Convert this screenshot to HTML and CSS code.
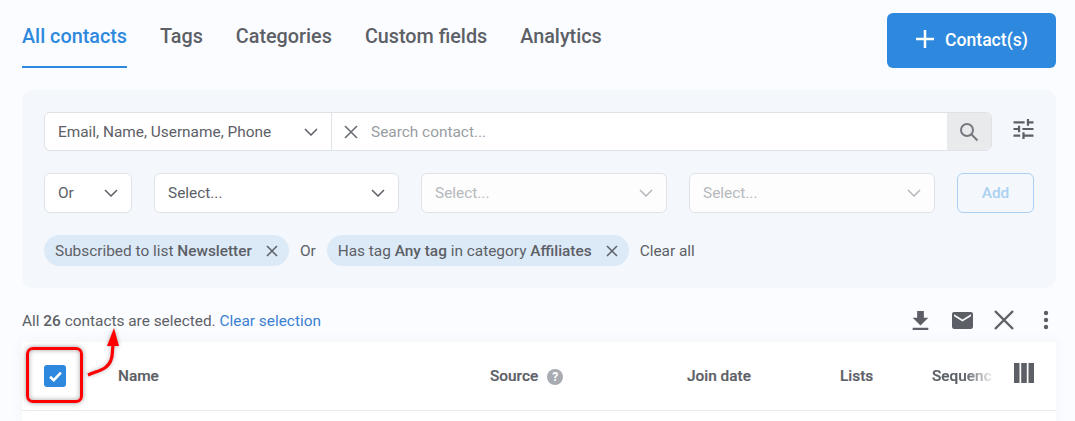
FILE: index.html
```html
<!DOCTYPE html>
<html lang="en">
<head>
<meta charset="utf-8">
<title>Contacts</title>
<link rel="stylesheet" href="styles.css">
</head>
<body>
<div class="page">
  <header class="top">
    <nav class="tabs">
      <a class="tab active">All contacts</a>
      <a class="tab">Tags</a>
      <a class="tab">Categories</a>
      <a class="tab">Custom fields</a>
      <a class="tab">Analytics</a>
    </nav>
    <button class="add-contact">
      <svg class="plus" viewBox="0 0 20 20"><path d="M10 1v18M1 10h18"/></svg>
      <span>Contact(s)</span>
    </button>
  </header>

  <section class="panel">
    <div class="search-row">
      <div class="search">
        <div class="search-type">
          <span>Email, Name, Username, Phone</span>
          <svg class="chev" viewBox="0 0 14 8"><path d="M1 1l6 6 6-6"/></svg>
        </div>
        <svg class="x-icon" viewBox="0 0 14 14"><path d="M1 1l12 12M13 1L1 13"/></svg>
        <span class="search-input">Search contact...</span>
        <div class="search-btn">
          <svg viewBox="0 0 20 20"><circle cx="8" cy="8" r="6"/><path d="M12.500 12.500L18.500 18.500"/></svg>
        </div>
      </div>
      <svg class="tune" viewBox="3 3 18 18"><path d="M3 17v2h6v-2H3zM3 5v2h10V5H3zm10 16v-2h8v-2h-8v-2h-2v6h2zM7 9v2H3v2h4v2h2V9H7zm14 4v-2H11v2h10zm-6-4h2V7h4V5h-4V3h-2v6z"/></svg>
    </div>

    <div class="filter-row">
      <div class="select op"><span>Or</span><svg class="chev" viewBox="0 0 14 8"><path d="M1 1l6 6 6-6"/></svg></div>
      <div class="select"><span>Select...</span><svg class="chev" viewBox="0 0 14 8"><path d="M1 1l6 6 6-6"/></svg></div>
      <div class="select disabled"><span>Select...</span><svg class="chev" viewBox="0 0 14 8"><path d="M1 1l6 6 6-6"/></svg></div>
      <div class="select disabled"><span>Select...</span><svg class="chev" viewBox="0 0 14 8"><path d="M1 1l6 6 6-6"/></svg></div>
      <button class="add">Add</button>
    </div>

    <div class="chips">
      <div class="chip"><span>Subscribed to list <b>Newsletter</b></span><svg viewBox="0 0 12 12"><path d="M1 1l10 10M11 1L1 11"/></svg></div>
      <span class="chip-or">Or</span>
      <div class="chip"><span>Has tag <b>Any tag</b> in category <b>Affiliates</b></span><svg viewBox="0 0 12 12"><path d="M1 1l10 10M11 1L1 11"/></svg></div>
      <span class="clear-all">Clear all</span>
    </div>
  </section>

  <div class="selection">
    <p class="sel-text">All <b>26</b> contacts are selected. <a>Clear selection</a></p>
    <div class="actions">
      <svg class="a-download" viewBox="5 3 14 17"><path d="M19 9h-4V3H9v6H5l7 7 7-7zM5 18v2h14v-2H5z"/></svg>
      <svg class="a-mail" viewBox="2 4 20 16"><path d="M20 4H4c-1.100 0-1.990.900-1.990 2L2 18c0 1.100.900 2 2 2h16c1.100 0 2-.900 2-2V6c0-1.100-.900-2-2-2zm0 4l-8 5-8-5V6l8 5 8-5v2z"/></svg>
      <svg class="a-close" viewBox="0 0 20 20"><path d="M1 1l18 18M19 1L1 19"/></svg>
      <svg class="a-more" viewBox="0 0 6 20"><circle cx="3" cy="3" r="2.200"/><circle cx="3" cy="10" r="2.200"/><circle cx="3" cy="17" r="2.200"/></svg>
    </div>
  </div>

  <section class="table">
    <div class="thead">
      <div class="th-check"><span class="checkbox"><svg viewBox="0 0 12 10"><path d="M1 5.200l3.400 3.200L11 1.500"/></svg></span></div>
      <div class="th">Name</div>
      <div class="th th-source">Source <i class="help">?</i></div>
      <div class="th">Join date</div>
      <div class="th">Lists</div>
      <div class="th seq">Sequences</div>
      <div class="th-cols"><svg viewBox="0 0 20 20"><path d="M0 0h5.500v20H0zM7.200 0h5.600v20H7.200zM14.500 0H20v20h-5.500z"/></svg></div>
    </div>
  </section>

  <div class="callout-box"></div>
  <svg class="callout-arrow" viewBox="0 0 40 50"><path class="line" d="M2 47C14 42 22 41 25 32C27 27 26 23 27 18"/><path class="head" d="M28 0L21 18H33z"/></svg>
</div>
</body>
</html>
```

FILE: styles.css
```css
* { box-sizing: border-box; }
html, body { margin: 0; padding: 0; }
body {
  width: 1075px;
  height: 421px;
  overflow: hidden;
  background: #fbfcff;
  font-family: Roboto, "Liberation Sans", sans-serif;
  color: #5c6066;
}
.page { position: relative; height: 421px; padding: 0 19px 0 22px; overflow: hidden; }

.top { display: flex; justify-content: space-between; height: 68px; padding-top: 13px; }
.tabs { display: flex; gap: 33px; margin-top: -13px; }
.tab {
  height: 68px;
  padding-top: 25px;
  font-size: 19.8px;
  line-height: 24px;
  font-weight: 500;
  color: #5c6066;
}
.tab.active { color: #2e89de; border-bottom: 2px solid #2e89de; }
.add-contact {
  display: flex;
  align-items: center;
  justify-content: center;
  gap: 10px;
  width: 169px;
  height: 55px;
  border: 0;
  border-radius: 6px;
  background: #2e89de;
  color: #fff;
  font: 500 17.6px Roboto, sans-serif;
  padding: 0 0 2px;
}
.plus { width: 20px; height: 20px; margin-top: -2px; }
.plus path { stroke: #fff; stroke-width: 2.5; fill: none; }

.panel {
  height: 198px;
  margin-top: 22px;
  padding: 22px;
  background: #f4f8fc;
  border-radius: 10px;
}
.search-row { display: flex; align-items: center; gap: 21px; }
.search {
  display: flex;
  align-items: center;
  width: 948px;
  height: 39px;
  background: #fff;
  border: 1px solid #dfe2e6;
  border-radius: 6px;
  overflow: hidden;
  font-size: 15.4px;
}
.search-type {
  display: flex;
  align-items: center;
  justify-content: space-between;
  width: 287px;
  height: 100%;
  padding: 0 13px;
  border-right: 1px solid #dfe2e6;
}
.chev { width: 14px; height: 8px; flex: none; }
.chev path { fill: none; stroke: #5c6066; stroke-width: 1.5; }
.x-icon { width: 14px; height: 14px; margin-left: 12px; }
.x-icon path { stroke: #6a6e74; stroke-width: 1.6; fill: none; }
.search-input { flex: 1; margin-left: 13px; color: #9a9da2; }
.search-btn {
  display: flex;
  align-items: center;
  justify-content: center;
  width: 44px;
  height: 100%;
  background: #e9eaec;
}
.search-btn svg { width: 20px; height: 20px; }
.search-btn circle, .search-btn path { fill: none; stroke: #75797f; stroke-width: 2; }
.tune { width: 21px; height: 20px; fill: #5c6066; margin-top: -6px; }

.filter-row { display: flex; gap: 22px; margin-top: 22px; }
.select {
  display: flex;
  align-items: center;
  justify-content: space-between;
  width: 246px;
  height: 40px;
  padding: 0 13px;
  background: #fff;
  border: 1px solid #dfe2e6;
  border-radius: 6px;
  font-size: 15.4px;
}
.select.op { width: 88px; }
.select:nth-child(2) { width: 245px; }
.select.disabled { color: #b5b8bc; background: #fdfdfe; }
.select.disabled .chev path { stroke: #b5b8bc; }
.add {
  width: 77px;
  height: 40px;
  background: transparent;
  border: 1px solid #abd0f2;
  border-radius: 6px;
  color: #abd0f2;
  font: 500 15.4px Roboto, sans-serif;
  padding: 0;
}

.chips { display: flex; align-items: center; margin-top: 22px; font-size: 15.4px; }
.chip {
  display: flex;
  align-items: center;
  height: 31px;
  padding: 0 11px;
  background: #dceaf7;
  border-radius: 16px;
  gap: 14px;
}
.chip b { font-weight: 500; }
.chip svg { width: 12px; height: 12px; }
.chip path { stroke: #5c6066; stroke-width: 1.5; fill: none; }
.chip-or { margin: 0 11px; }
.clear-all { margin-left: 11px; }

.selection { display: flex; justify-content: space-between; align-items: center; height: 54px; }
.sel-text { margin: 0; font-size: 15.4px; position: relative; top: 6px; }
.sel-text b { font-weight: 500; }
.sel-text a { color: #3a80d2; }
.actions { display: flex; align-items: center; position: relative; top: 5px; }
.actions svg { flex: none; fill: #5c6066; }
.a-download { width: 17px; height: 19px; margin-right: 23px; }
.a-mail { width: 21px; height: 17px; margin-right: 21px; }
.a-close { width: 20px; height: 20px; margin-right: 29px; }
.a-close path { stroke: #5c6066; stroke-width: 2.4; fill: none; }
.a-more { width: 6px; height: 20px; margin-right: 7px; }

.table {
  height: 79px;
  background: #fff;
  box-shadow: 0 0 12px rgba(120, 130, 160, 0.07);
}
.thead {
  position: relative;
  display: grid;
  grid-template-columns: 96px 372px 197px 153px 92px 60px;
  align-items: center;
  height: 69px;
  border-bottom: 1px solid #e8eaed;
  font-size: 15.4px;
}
.th { font-weight: 500; white-space: nowrap; -webkit-text-stroke: 0.2px #5c6066; }
.th-source { display: flex; align-items: center; gap: 9px; }
.th-check { padding-left: 22px; display: flex; }
.checkbox {
  display: flex;
  align-items: center;
  justify-content: center;
  width: 22px;
  height: 22px;
  background: #2e89de;
  border-radius: 3px;
}
.checkbox svg { width: 13px; height: 11px; }
.checkbox path { fill: none; stroke: #fff; stroke-width: 2.4; }
.help {
  display: block;
  width: 16px;
  height: 16px;
  margin-top: 2px;
  border-radius: 50%;
  background: #a8abb2;
  color: #fff;
  font: 700 12px/16px Roboto, sans-serif;
  text-align: center;
  -webkit-text-stroke: 0;
}
.seq {
  width: 60px;
  overflow: hidden;
  -webkit-mask-image: linear-gradient(90deg, #000 55%, rgba(0,0,0,0.1) 100%);
  mask-image: linear-gradient(90deg, #000 55%, rgba(0,0,0,0.1) 100%);
}
.th-cols { position: absolute; right: 22px; top: 21px; width: 20px; height: 20px; }
.th-cols svg { display: block; width: 20px; height: 20px; fill: #5c6066; }

.callout-box {
  position: absolute;
  left: 26px;
  top: 347px;
  width: 57px;
  height: 56px;
  border: 3.5px solid #f00;
  border-radius: 7px;
  box-shadow: 0 0 5px rgba(0,0,0,0.4), inset 0 0 5px rgba(0,0,0,0.35);
}
.callout-arrow {
  position: absolute;
  left: 86px;
  top: 328px;
  width: 40px;
  height: 50px;
  filter: drop-shadow(0 0 2px rgba(0,0,0,0.3));
}
.callout-arrow .line { fill: none; stroke: #f00; stroke-width: 3.2; }
.callout-arrow .head { fill: #f00; }
```
